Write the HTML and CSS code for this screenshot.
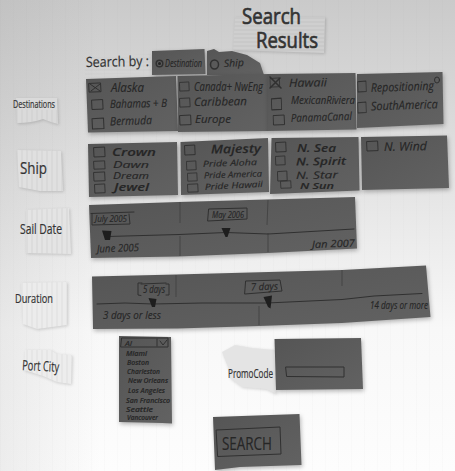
FILE: index.html
```html
<!DOCTYPE html>
<html lang="en">
<head>
<meta charset="utf-8">
<title>Search Results</title>
<link rel="stylesheet" href="styles.css">
</head>
<body>
<main class="board">
  <svg class="defs" width="0" height="0" aria-hidden="true">
    <defs>
      <pattern id="ruled" width="5" height="5" patternUnits="userSpaceOnUse"><path d="M2 0V5" stroke="#bcbcbc" stroke-width=".6" opacity=".65"/></pattern>
      <pattern id="lined" width="4" height="4" patternUnits="userSpaceOnUse"><path d="M0 2H4" stroke="#b5b5b5" stroke-width=".6" opacity=".7"/></pattern>
      <linearGradient id="felt" x1="0" y1="0" x2="1" y2="1"><stop offset="0" stop-color="#555"/><stop offset="1" stop-color="#626262"/></linearGradient>
      <symbol id="box" viewBox="0 0 14 12" preserveAspectRatio="none"><path d="M1 1.6L12.5 1L13 10.6L1.5 11Z"/></symbol>
    </defs>
  </svg>

  <header class="row title">
    <svg width="100" height="46" viewBox="230 0 100 46">
      <g class="note"><path d="M235 17L325 17L324 53L233 50Z" fill="#cfcfcf"/><path d="M235 17L325 17L324 53L233 50Z" fill="url(#lined)"/></g>
      <g class="marker"><text x="242" y="24" font-size="22" textLength="59" lengthAdjust="spacingAndGlyphs">Search</text>
      <text x="256" y="48" font-size="22" textLength="62" lengthAdjust="spacingAndGlyphs">Results</text></g>
    </svg>
  </header>

  <section class="row by">
    <svg width="72" height="28" viewBox="80 46 72 28">
      <path d="M85 56L151 54L151 73L85 75Z" fill="url(#lined)" opacity=".45"/>
      <text class="pen" x="86" y="67" font-size="14" textLength="63" lengthAdjust="spacingAndGlyphs" transform="rotate(-1 86 67)">Search by :</text>
    </svg>
    <svg width="55" height="28" viewBox="152 46 55 28">
      <path class="card" d="M152 51L204.500 49L205.500 74L152 75Z"/>
      <circle class="line bold" cx="159.500" cy="63.500" r="3.300"/><circle cx="159.500" cy="63.500" r="1.500" fill="#252525"/>
      <text class="ink" x="165" y="67" font-size="10" textLength="37" lengthAdjust="spacingAndGlyphs">Destination</text>
    </svg>
    <svg width="60" height="28" viewBox="207 46 60 28">
      <path class="card" d="M207 51L214 49L219 52L232 51L247 55L260 63L264 75L207 75Z"/>
      <ellipse class="line bold" cx="214.500" cy="64.500" rx="4" ry="4.500"/>
      <text class="ink" x="224" y="67" font-size="10" textLength="20" lengthAdjust="spacingAndGlyphs" transform="rotate(-3 224 67)">Ship</text>
    </svg>
  </section>

  <section class="row destinations">
    <svg width="80" height="61" viewBox="0 74 80 61">
      <g class="note"><path d="M16 98L57 98L58 124Q50 122 43 119Q32 123 17 123Z" fill="#dadada"/><path d="M16 109L57 110L58 124Q50 122 43 119Q32 123 17 123Z" fill="url(#ruled)"/></g>
      <text class="pen" x="13" y="108" font-size="10" textLength="42" lengthAdjust="spacingAndGlyphs">Destinations</text>
    </svg>
    <svg width="97" height="61" viewBox="80 74 97 61">
      <path class="card" d="M86 79L176 76L178 131L88 132.500Z"/>
      <use href="#box" x="88" y="82" width="14" height="11"/><path class="line" d="M90 84L100 91M91 91L100 84"/>
      <use href="#box" x="91" y="98.500" width="13" height="12"/><use href="#box" x="91" y="117" width="14" height="13"/>
      <text class="ink" x="111" y="92" font-size="12" textLength="33" lengthAdjust="spacingAndGlyphs">Alaska</text>
      <text class="ink" x="110" y="108" font-size="11.500" textLength="57" lengthAdjust="spacingAndGlyphs" transform="rotate(-1 110 108)">Bahamas + B</text>
      <text class="ink" x="110" y="125.500" font-size="11.500" textLength="42" lengthAdjust="spacingAndGlyphs" transform="rotate(-2 110 125)">Bermuda</text>
    </svg>
    <svg width="91" height="61" viewBox="177 74 91 61">
      <path class="card" d="M177.500 76L268 74L268 131L178 132Z"/>
      <use href="#box" x="179" y="81" width="11" height="11"/><use href="#box" x="179" y="97" width="12" height="11"/><use href="#box" x="179" y="114" width="13" height="12"/>
      <text class="ink" x="194" y="90.500" font-size="12" textLength="69" lengthAdjust="spacingAndGlyphs">Canada+ NwEng</text>
      <text class="ink" x="194" y="106" font-size="11.500" textLength="53" lengthAdjust="spacingAndGlyphs" transform="rotate(-1 194 106)">Caribbean</text>
      <text class="ink" x="195" y="123" font-size="11.500" textLength="36" lengthAdjust="spacingAndGlyphs">Europe</text>
    </svg>
    <svg width="89" height="61" viewBox="268 74 89 61">
      <path class="card" d="M267.500 74L355.500 73L356.500 129.500L267.500 131Z"/>
      <use href="#box" x="269.500" y="77" width="11" height="11"/><path class="line bold" d="M270 77L281 88M270 88L280 78"/>
      <use href="#box" x="270.500" y="97" width="12" height="14"/><use href="#box" x="272.500" y="114" width="13" height="12"/>
      <text class="ink" x="289" y="87" font-size="11.500" textLength="38" lengthAdjust="spacingAndGlyphs" transform="rotate(-1 289 87)">Hawaii</text>
      <text class="ink" x="291" y="104" font-size="11" textLength="64" lengthAdjust="spacingAndGlyphs">MexicanRiviera</text>
      <text class="ink" x="291" y="122" font-size="11" textLength="61" lengthAdjust="spacingAndGlyphs" transform="rotate(-2 291 122)">PanamaCanal</text>
    </svg>
    <svg width="98" height="61" viewBox="357 74 98 61">
      <path class="card" d="M357 74L442.500 72L443.500 124L357 128Z"/>
      <use href="#box" x="357" y="80" width="10" height="13"/><use href="#box" x="357" y="101" width="10" height="13"/>
      <text class="ink" x="371" y="92" font-size="12" textLength="63" lengthAdjust="spacingAndGlyphs" transform="rotate(-2 371 92)">Repositioning</text>
      <ellipse class="line" cx="437" cy="80" rx="2.500" ry="3"/>
      <text class="ink" x="371" y="110.500" font-size="12" textLength="67" lengthAdjust="spacingAndGlyphs" transform="rotate(-2 371 110)">SouthAmerica</text>
    </svg>
  </section>

  <section class="row ships">
    <svg width="80" height="62" viewBox="0 135 80 62">
      <g class="note"><path d="M17 150L61 151L63 191L40 191L19 187Z" fill="#e0e0e0"/><path d="M17 150L61 151L63 191L40 191L19 187Z" fill="url(#ruled)"/></g>
      <text class="pen" x="20" y="174" font-size="16" textLength="27" lengthAdjust="spacingAndGlyphs">Ship</text>
    </svg>
    <svg width="99" height="62" viewBox="80 135 99 62">
      <path class="card" d="M88 144L177 142L178 195L89 197Z"/>
      <use href="#box" x="93" y="146" width="13" height="12"/><use href="#box" x="93" y="160" width="13" height="10"/><use href="#box" x="93" y="171" width="13" height="11"/><use href="#box" x="94" y="183" width="12" height="11"/>
      <text class="ink bold" x="112" y="156" font-size="11" textLength="44" lengthAdjust="spacingAndGlyphs">Crown</text>
      <text class="ink" x="113" y="167.500" font-size="9.500" textLength="36" lengthAdjust="spacingAndGlyphs">Dawn</text>
      <text class="ink" x="113" y="178.500" font-size="9.500" textLength="36" lengthAdjust="spacingAndGlyphs">Dream</text>
      <text class="ink bold" x="114" y="191" font-size="10.500" textLength="35" lengthAdjust="spacingAndGlyphs">Jewel</text>
    </svg>
    <svg width="91" height="62" viewBox="179 135 91 62">
      <path class="card" d="M180.500 142L268 138L269 192L181 195Z"/>
      <use href="#box" x="184" y="144" width="12" height="12"/><use href="#box" x="186" y="160" width="11" height="11"/><use href="#box" x="187" y="172" width="11" height="10"/><use href="#box" x="187" y="183" width="12" height="10"/>
      <text class="ink bold" x="211" y="153.500" font-size="12" textLength="50" lengthAdjust="spacingAndGlyphs" transform="rotate(-1 211 153)">Majesty</text>
      <text class="ink" x="203" y="167" font-size="8.500" textLength="54" lengthAdjust="spacingAndGlyphs" transform="rotate(-2 203 167)">Pride Aloha</text>
      <text class="ink" x="204" y="178.500" font-size="8.500" textLength="58" lengthAdjust="spacingAndGlyphs" transform="rotate(-2 204 178)">Pride America</text>
      <text class="ink" x="205" y="190" font-size="8.500" textLength="58" lengthAdjust="spacingAndGlyphs" transform="rotate(-3 205 190)">Pride Hawaii</text>
    </svg>
    <svg width="90" height="62" viewBox="270 135 90 62">
      <path class="card" d="M271.500 138L358.500 137L359.500 190.500L270 194Z"/>
      <use href="#box" x="275" y="141" width="12" height="12"/><use href="#box" x="275" y="155" width="11" height="11"/><use href="#box" x="277" y="170" width="11" height="12"/><use href="#box" x="280" y="180" width="12" height="9"/>
      <text class="ink bold" x="297" y="152" font-size="11" textLength="39" lengthAdjust="spacingAndGlyphs">N. Sea</text>
      <text class="ink bold" x="296" y="165.500" font-size="10.500" textLength="50" lengthAdjust="spacingAndGlyphs" transform="rotate(-1 296 165)">N. Spirit</text>
      <text class="ink" x="296" y="179" font-size="10" textLength="42" lengthAdjust="spacingAndGlyphs" transform="rotate(-1 296 179)">N. Star</text>
      <text class="ink bold" x="300" y="188.500" font-size="8" textLength="34" lengthAdjust="spacingAndGlyphs">N Sun</text>
    </svg>
    <svg width="95" height="62" viewBox="360 135 95 62">
      <path class="card" d="M361 137L447 135.500L449 188L362 190Z"/>
      <use href="#box" x="366" y="140" width="13" height="12"/>
      <text class="ink" x="384" y="151" font-size="12" textLength="43" lengthAdjust="spacingAndGlyphs" transform="rotate(-1 384 151)">N. Wind</text>
    </svg>
  </section>

  <section class="row sail">
    <svg width="80" height="66" viewBox="0 197 80 66">
      <g class="note"><path d="M26 210L69 208L71 254L26 253Z" fill="#e4e4e4"/><path d="M26 210L69 208L71 254L26 253Z" fill="url(#ruled)"/></g>
      <text class="pen" x="20" y="234" font-size="15" textLength="42" lengthAdjust="spacingAndGlyphs">Sail Date</text>
    </svg>
    <svg width="375" height="66" viewBox="80 197 375 66">
      <path class="card" d="M89 205L178 202L355 197L357 248.500L268 253L178 256.500L91 258Z"/>
      <path class="fold" d="M180 202V223M180 236V256M268 200L267 225M268 233V252"/>
      <path class="line" d="M91 213.500L134 212M92 214L92 225L130 224L129 214M209 209L247 208L247 219L208 221Z"/>
      <text class="ink" x="95" y="222" font-size="9" textLength="32" lengthAdjust="spacingAndGlyphs">July 2005</text>
      <text class="ink" x="212" y="218" font-size="9" textLength="32" lengthAdjust="spacingAndGlyphs">May 2006</text>
      <path class="line" d="M108 236.500L179 234.500L226 232.500L268 234L354 229"/>
      <path class="thumb" d="M102 230.500L111.500 231L110 240L105 240ZM221.500 228L230.500 228L227.500 237L225.500 237Z"/>
      <text class="ink" x="97" y="252.500" font-size="10.500" textLength="42" lengthAdjust="spacingAndGlyphs" transform="rotate(-2 97 252)">June 2005</text>
      <text class="ink" x="312" y="248" font-size="10" textLength="43" lengthAdjust="spacingAndGlyphs" transform="rotate(-2 312 248)">Jan 2007</text>
    </svg>
  </section>

  <section class="row duration">
    <svg width="80" height="69" viewBox="0 263 80 69">
      <g class="note"><path d="M21 283L67 282L67 325L37 329L23 324Z" fill="#ececec"/><path d="M21 283L67 282L67 325L37 329L23 324Z" fill="url(#ruled)" opacity=".8"/></g>
      <text class="pen" x="15" y="303" font-size="13" textLength="38" lengthAdjust="spacingAndGlyphs">Duration</text>
    </svg>
    <svg width="375" height="69" viewBox="80 263 375 69">
      <path class="card" d="M92 276.500L176 274.500L342 270L426 265.500L430.500 317L342 323L259 326L178 328.500L93 329Z"/>
      <path class="fold" d="M176 275V297M259 306V325M342 270V286"/>
      <path class="line" d="M97 304L125 303L153 304L202 303L267 303L342 299.500L374 296L422 293.500"/>
      <path class="line" d="M142 283H138V295L141 295.500M166 284H169V295H166M141 284L166 283M246 281L280 280L282 291L245 294Z"/>
      <text class="ink" x="143" y="292.500" font-size="10" textLength="22" lengthAdjust="spacingAndGlyphs">5 days</text>
      <text class="ink" x="251" y="290.500" font-size="10" textLength="27" lengthAdjust="spacingAndGlyphs" transform="rotate(-2 251 290)">7 days</text>
      <path class="thumb" d="M148.500 298L156.500 299L155 307L152 307ZM263.500 297L272 295.500L270.500 308.500L268 307Z"/>
      <text class="ink" x="103" y="318.500" font-size="11.500" textLength="58" lengthAdjust="spacingAndGlyphs">3 days or less</text>
      <text class="ink" x="370" y="309" font-size="10" textLength="58" lengthAdjust="spacingAndGlyphs">14 days or more</text>
    </svg>
  </section>

  <section class="row port">
    <svg width="112" height="80" viewBox="0 332 112 80">
      <g class="note"><path d="M25 350L50 350L57 354L72 355L71 384L57 382L43 376L24 370Z" fill="#ededed"/><path d="M25 350L50 350L57 354L72 355L71 384L57 382L43 376L24 370Z" fill="url(#ruled)" opacity=".7"/></g>
      <text class="pen" x="22" y="370" font-size="14" textLength="37" lengthAdjust="spacingAndGlyphs" transform="rotate(3 22 370)">Port City</text>
    </svg>
    <svg width="108" height="80" viewBox="112 332 108 80">
      <path class="card" d="M119 336L171 337L172 423.500L162 423L119 422Z"/>
      <path class="line" d="M122 338H168V347H121ZM157 339V346M160 341L163 345L167 340"/>
      <text class="ink" x="125" y="345.500" font-size="7" textLength="7" lengthAdjust="spacingAndGlyphs">Al</text>
      <g class="ink bold" font-size="6.800"><text x="126" y="355.500" textLength="21" lengthAdjust="spacingAndGlyphs">Miami</text>
      <text x="127" y="364.500" textLength="22" lengthAdjust="spacingAndGlyphs">Boston</text>
      <text x="127" y="373.500" textLength="33" lengthAdjust="spacingAndGlyphs">Charleston</text>
      <text x="128" y="382.500" textLength="40" lengthAdjust="spacingAndGlyphs">New Orleans</text>
      <text x="128" y="393" textLength="37" lengthAdjust="spacingAndGlyphs">Los Angeles</text>
      <text x="126" y="403" textLength="44" lengthAdjust="spacingAndGlyphs">San Francisco</text>
      <text x="126" y="411.500" textLength="27" lengthAdjust="spacingAndGlyphs">Seattle</text>
      <text x="127" y="420" textLength="31" lengthAdjust="spacingAndGlyphs">Vancouver</text></g>
    </svg>
    <svg width="54" height="80" viewBox="220 332 54 80">
      <path class="note" d="M222 352L235 345L252 348L275 350L276 394L266 389L242 387L230 378L228 367Z" fill="#e4e4e4"/>
      <text class="pen" x="228" y="378" font-size="12" textLength="45" lengthAdjust="spacingAndGlyphs">PromoCode</text>
    </svg>
    <svg width="181" height="80" viewBox="274 332 181 80">
      <path class="card" d="M274.500 339L361 338L363 389L276 390Z"/>
      <path class="line" d="M286 367L344 367L344 377L287 376.500Z"/>
    </svg>
  </section>

  <footer class="row action">
    <svg width="100" height="59" viewBox="210 412 100 59">
      <path class="card" d="M213 417L299.500 414L301.500 465L240 467L215 470Z"/>
      <path class="line" d="M216.500 430L280 427L281 454L218 456.500Z"/>
      <text class="ink thin" x="222" y="449.500" font-size="18" textLength="50" lengthAdjust="spacingAndGlyphs">SEARCH</text>
    </svg>
  </footer>
</main>
</body>
</html>
```

FILE: styles.css
```css
* { box-sizing: border-box; }

body {
  margin: 0;
  overflow: hidden;
  font-family: "Open Sans", "Noto Sans", sans-serif;
}

.board {
  display: flex;
  flex-direction: column;
  width: 455px;
  height: 471px;
  overflow: hidden;
  background:
    repeating-linear-gradient(90deg, rgba(120, 120, 120, .025) 0 1px, transparent 1px 13px),
    linear-gradient(90deg, rgba(150, 150, 150, .16), transparent 22%),
    linear-gradient(180deg, #cacaca 0, #d8d8d8 22%, #e8e8e8 45%, #f8f8f8 70%, #fdfdfd 100%);
}

.defs { position: absolute; }

.row {
  display: flex;
  flex: none;
}

.row svg {
  display: block;
  flex: none;
  overflow: visible;
}

.title { height: 46px; padding-left: 230px; }
.by { height: 28px; padding-left: 80px; }
.destinations { height: 61px; }
.ships { height: 62px; }
.sail { height: 66px; }
.duration { height: 69px; }
.port { height: 80px; }
.action { height: 59px; padding-left: 210px; }

.card {
  fill: url(#felt);
  filter: drop-shadow(1px 2px 2px rgba(0, 0, 0, .28));
}

.note { filter: drop-shadow(1px 1px 1.5px rgba(0, 0, 0, .16)); }

.line, use {
  fill: none;
  stroke: #303030;
  stroke-width: 1;
  stroke-linejoin: round;
  stroke-linecap: round;
}

.line.bold { stroke-width: 1.5; }

.fold {
  fill: none;
  stroke: #454545;
  stroke-width: 1;
}

.thumb { fill: #1e1e1e; }

.ink {
  fill: #262626;
  stroke: #262626;
  stroke-width: .15;
  font-style: italic;
}

.ink.bold { font-weight: 600; }
.ink.thin { font-style: normal; font-weight: 400; }

.pen {
  fill: #333;
  stroke: #333;
  stroke-width: .2;
}

.marker {
  fill: #333;
  stroke: #333;
  stroke-width: .7;
}
```
